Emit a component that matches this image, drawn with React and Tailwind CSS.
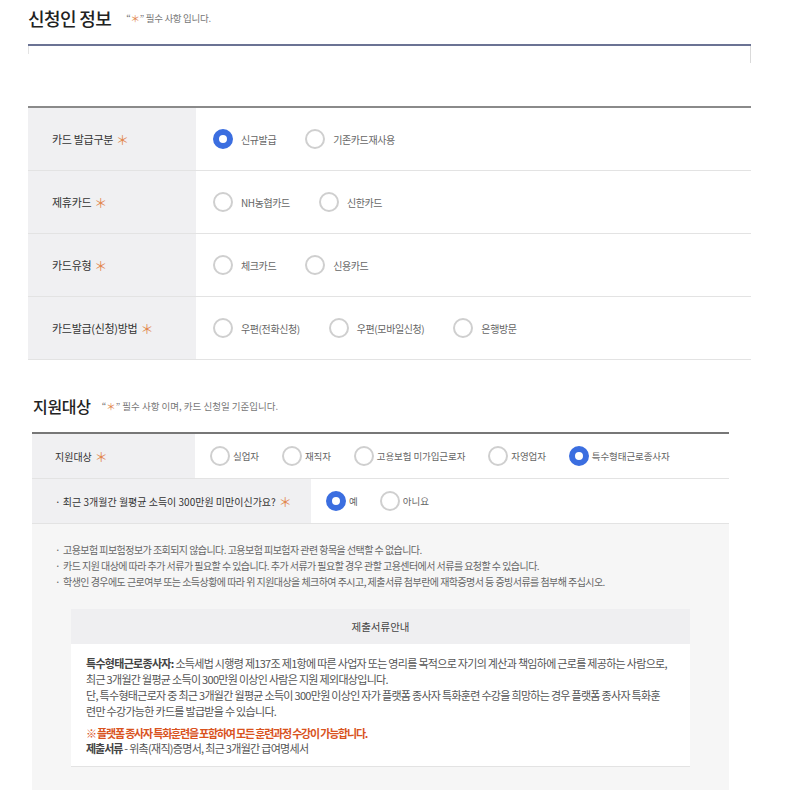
function Radio({ label, checked, gap = "gap-2", mr = "mr-[29px]" }) {
  return (
    <label className={`flex items-center ${gap} ${mr}`}>
      {checked ? (
        <span className="w-5 h-5 rounded-full border-[6px] border-[#3b6ee0] bg-white shrink-0" />
      ) : (
        <span className="w-5 h-5 rounded-full border-2 border-[#cfcfcf] bg-white shrink-0" />
      )}
      <span className="whitespace-nowrap">{label}</span>
    </label>
  );
}

function Star() {
  return <span className="text-[#e2874e] ml-[3px] text-[13px] leading-none">＊</span>;
}

const rows1 = [
  { label: "카드 발급구분", items: ["신규발급", "기존카드재사용"], checked: 0 },
  { label: "제휴카드", items: ["NH농협카드", "신한카드"], checked: -1 },
  { label: "카드유형", items: ["체크카드", "신용카드"], checked: -1 },
  { label: "카드발급(신청)방법", items: ["우편(전화신청)", "우편(모바일신청)", "은행방문"], checked: -1 },
];

const targets = ["실업자", "재직자", "고용보험 미가입근로자", "자영업자", "특수형태근로종사자"];

export default function App() {
  return (
    <div
      className="w-[800px] h-[800px] bg-white overflow-hidden text-[#333]"
      style={{ fontFamily: '"Noto Sans CJK KR", "Noto Sans", sans-serif' }}
    >
      {/* 신청인 정보 */}
      <section className="ml-[28px] w-[723px]">
        <div className="flex items-center h-[35px] pt-[1px]">
          <h2 className="text-[18px] font-medium text-[#222] leading-none tracking-[-0.6px]">신청인 정보</h2>
          <p className="ml-[15px] text-[9.5px] text-[#777] leading-none pt-[2px] tracking-[-0.3px]">
            “<span className="text-[#e2874e]">＊</span>” 필수 사항 입니다.
          </p>
        </div>
        <div className="h-[9px]" />
        <div className="border-t-2 border-[#6b7394] h-[62px] flex justify-between">
          <div className="w-px h-[8px] bg-[#e4e4e4]" />
          <div className="w-px h-[17px] bg-[#dadada]" />
        </div>

        <div className="border-t-2 border-[#8a8a8a]">
          {rows1.map((r) => (
            <div key={r.label} className="flex h-[63px] border-b border-[#e3e3e3]">
              <div className="w-[168px] bg-[#f0f0f2] flex items-center pl-[24px] text-[11px] text-[#333] tracking-[-0.3px]">
                {r.label}
                <Star />
              </div>
              <div className="flex items-center pl-[17px] text-[10px] text-[#666] tracking-[-0.4px]">
                {r.items.map((it, i) => (
                  <Radio key={it} label={it} checked={i === r.checked} />
                ))}
              </div>
            </div>
          ))}
        </div>
      </section>

      {/* 지원대상 */}
      <section className="ml-[32px] w-[697px]">
        <div className="flex items-center h-[72px] pt-[20px] pl-[1px]">
          <h2 className="text-[16px] font-medium text-[#222] leading-none tracking-[-0.3px]">지원대상</h2>
          <p className="ml-[11px] text-[9.5px] text-[#777] leading-none pt-[2px]">
            “<span className="text-[#e2874e]">＊</span>” 필수 사항 이며, 카드 신청일 기준입니다.
          </p>
        </div>

        <div className="border-t-2 border-[#777]">
          <div className="flex h-[45px] border-b border-[#e3e3e3]">
            <div className="w-[163px] bg-[#f0f0f2] flex items-center pl-[23px] text-[10px] text-[#333]">
              지원대상
              <Star />
            </div>
            <div className="flex items-center pl-[15px] text-[9.5px] text-[#666] tracking-[-0.1px]">
              {targets.map((t, i) => (
                <Radio key={t} label={t} checked={i === 4} gap="gap-[3px]" mr="mr-[23px]" />
              ))}
            </div>
          </div>
          <div className="flex h-[45px] border-b border-[#e3e3e3]">
            <div className="w-[279px] bg-[#f0f0f2] flex items-center pl-[23px] text-[10px] text-[#333]">
              · 최근 3개월간 월평균 소득이 300만원 미만이신가요?
              <Star />
            </div>
            <div className="flex items-center pl-[15px] text-[9.5px] text-[#666]">
              <Radio label="예" checked gap="gap-[3px]" mr="mr-[22px]" />
              <Radio label="아니요" gap="gap-[3px]" />
            </div>
          </div>
        </div>

        <div className="bg-[#f6f6f6] pt-[18px] pb-[23px]">
          <ul className="pl-[23px] text-[10px] text-[#666] leading-[16px] tracking-[-0.55px]">
            <li className="flex">
              <span className="w-[8px]">·</span>
              고용보험 피보험정보가 조회되지 않습니다. 고용보험 피보험자 관련 항목을 선택할 수 없습니다.
            </li>
            <li className="flex">
              <span className="w-[8px]">·</span>
              카드 지원 대상에 따라 추가 서류가 필요할 수 있습니다. 추가 서류가 필요할 경우 관할 고용센터에서 서류를 요청할 수 있습니다.
            </li>
            <li className="flex">
              <span className="w-[8px]">·</span>
              학생인 경우에도 근로여부 또는 소득상황에 따라 위 지원대상을 체크하여 주시고, 제출서류 첨부란에 재학증명서 등 증빙서류를 첨부해 주십시오.
            </li>
          </ul>

          <div className="ml-[39px] w-[619px] mt-[19px] bg-white border-b border-[#e3e3e3]">
            <div className="h-[35px] bg-[#efeff1] flex items-center justify-center text-[10.5px] text-[#444]">
              제출서류안내
            </div>
            <div className="pl-[15px] pt-[11px] pb-[10px] text-[11px] text-[#555] leading-[16px] whitespace-nowrap tracking-[-0.7px]">
              <p>
                <b className="font-bold text-[#444]">특수형태근로종사자:</b> 소득세법 시행령 제137조 제1항에 따른 사업자 또는 영리를 목적으로 자기의 계산과 책임하에 근로를 제공하는 사람으로,
              </p>
              <p>최근 3개월간 월평균 소득이 300만원 이상인 사람은 지원 제외대상입니다.</p>
              <p>단, 특수형태근로자 중 최근 3개월간 월평균 소득이 300만원 이상인 자가 플랫폼 종사자 특화훈련 수강을 희망하는 경우 플랫폼 종사자 특화훈</p>
              <p>련만 수강가능한 카드를 발급받을 수 있습니다.</p>
              <p className="mt-[7px] leading-[15px] font-bold text-[#d9531e] tracking-[-1.2px]">※ 플랫폼 종사자 특화훈련을 포함하여 모든 훈련과정 수강이 가능합니다.</p>
              <p className="leading-[15px]">
                <b className="font-bold text-[#444] tracking-[-1px]">제출서류</b> - 위촉(재직)증명서, 최근 3개월간 급여명세서
              </p>
            </div>
          </div>
        </div>
      </section>
    </div>
  );
}
